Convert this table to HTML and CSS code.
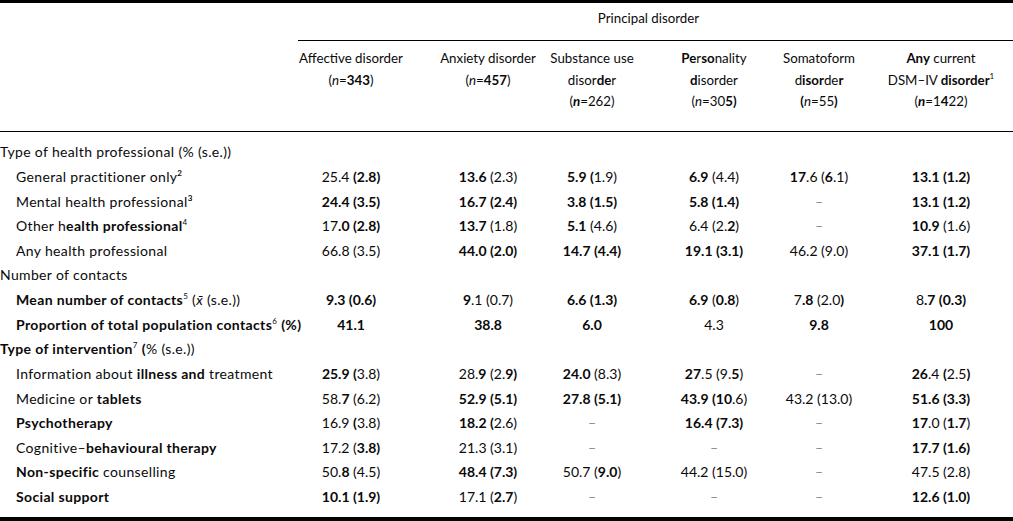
FILE: index.html
```html
<!DOCTYPE html>
<html lang="en">
<head>
<meta charset="utf-8">
<title>Table</title>
<link rel="stylesheet" href="styles.css">
</head>
<body>
<div class="table">
  <div class="head">
    <div class="grid top">
      <div class="title">Principal disorder</div>
    </div>
    <div class="grid cols">
      <div class="hc c1"><div>Affective disorder</div><div>(<i>n</i>=<b>343</b>)</div></div>
      <div class="hc c2"><div>Anxiety disorder</div><div>(<i>n</i>=<b>457</b>)</div></div>
      <div class="hc c3"><div>Substance use</div><div>disor<b>de</b>r</div><div>(<b><i>n</i></b>=262)</div></div>
      <div class="hc c4"><div><b>Pe</b>r<b>so</b>nality</div><div><b>d</b>isorder</div><div>(<i>n</i>=30<b>5)</b></div></div>
      <div class="hc c5"><div>Somatoform</div><div>d<b>isor</b>de<b>r</b></div><div><b>(</b><i>n</i>=55<b>)</b></div></div>
      <div class="hc c6"><div><b>Any</b> current</div><div>DSM–IV <b>disorder</b><sup class="fn">1</sup></div><div>(<b><i>n</i></b>=1<b>4</b>22)</div></div>
    </div>
  </div>
  <div class="grid body">
    <div class="lab cat">Type of health professional (% (s.e.))</div>

    <div class="lab sub">General practitioner only<sup><b>2</b></sup></div>
    <div class="c1">25.4 <b>(2.8)</b></div>
    <div class="c2"><b>13.6</b> (2.3)</div>
    <div class="c3"><b>5.9 (</b>1.9)</div>
    <div class="c4"><b>6.9</b> (4.4)</div>
    <div class="c5"><b>17</b>.6 (<b>6</b>.1)</div>
    <div class="c6"><b>13.1 (1.2)</b></div>

    <div class="lab sub">Mental health professional<sup><b>3</b></sup></div>
    <div class="c1"><b>24.4 (3.5)</b></div>
    <div class="c2"><b>16.7 (2.4)</b></div>
    <div class="c3"><b>3.8 (1.5)</b></div>
    <div class="c4"><b>5.8 (1.4)</b></div>
    <div class="c5 dash">–</div>
    <div class="c6"><b>13.1 (1.2)</b></div>

    <div class="lab sub">Other h<b>ealth professional</b><sup>4</sup></div>
    <div class="c1">17<b>.0 (2.8)</b></div>
    <div class="c2"><b>13.7</b> (1.8)</div>
    <div class="c3"><b>5.1</b> (4.6)</div>
    <div class="c4">6.4 (2.<b>2</b>)</div>
    <div class="c5 dash">–</div>
    <div class="c6"><b>10.9</b> (1.6)</div>

    <div class="lab sub">Any health professional</div>
    <div class="c1">66.8 (3.5)</div>
    <div class="c2"><b>44.0 (2.0)</b></div>
    <div class="c3"><b>14.7 (4.4)</b></div>
    <div class="c4"><b>19.1 (3.1)</b></div>
    <div class="c5">46.2 (9.0)</div>
    <div class="c6"><b>37.1 (1.7)</b></div>

    <div class="lab cat">Number of contacts</div>

    <div class="lab sub"><b>Mean number of contacts</b><sup>5</sup> (<i>x̄</i> (s.e.))</div>
    <div class="c1"><b>9.3 (0.6)</b></div>
    <div class="c2"><b>9</b>.1 (0.7)</div>
    <div class="c3"><b>6.6 (1.3)</b></div>
    <div class="c4"><b>6.9</b> (<b>0.8</b>)</div>
    <div class="c5">7<b>.8</b> (2.0<b>)</b></div>
    <div class="c6">8<b>.7 (0.3)</b></div>

    <div class="lab sub"><b>Proportion of total population contacts</b><sup>6</sup> <b>(%)</b></div>
    <div class="c1"><b>41.1</b></div>
    <div class="c2"><b>38.8</b></div>
    <div class="c3"><b>6.0</b></div>
    <div class="c4">4.3</div>
    <div class="c5"><b>9.8</b></div>
    <div class="c6"><b>100</b></div>

    <div class="lab cat"><b>Type of intervention</b><sup>7</sup> <b>(</b>% (s.e.))</div>

    <div class="lab sub">Information about <b>illness and</b> treatment</div>
    <div class="c1"><b>25.9 (</b>3.8)</div>
    <div class="c2">28.<b>9</b> (2.<b>9)</b></div>
    <div class="c3"><b>24.0</b> (8.3)</div>
    <div class="c4"><b>27</b>.5 (9.<b>5</b>)</div>
    <div class="c5 dash">–</div>
    <div class="c6"><b>26</b>.4 <b>(</b>2.5<b>)</b></div>

    <div class="lab sub">Medicine or <b>tablets</b></div>
    <div class="c1">58.<b>7</b> (6.2)</div>
    <div class="c2"><b>52.9 (5.1)</b></div>
    <div class="c3"><b>27.8 (5.1)</b></div>
    <div class="c4"><b>43.9 (10</b>.6)</div>
    <div class="c5">43.2 (13.0)</div>
    <div class="c6"><b>51.6 (3.3)</b></div>

    <div class="lab sub"><b>Psychotherapy</b></div>
    <div class="c1">16.9 <b>(</b>3.8)</div>
    <div class="c2"><b>18.2 (</b>2.6)</div>
    <div class="c3 dash">–</div>
    <div class="c4"><b>16.4 (7.3)</b></div>
    <div class="c5 dash">–</div>
    <div class="c6"><b>17</b>.0 (<b>1.7</b>)</div>

    <div class="lab sub">Cognitive–<b>behavioural therapy</b></div>
    <div class="c1">17.2 (<b>3.8)</b></div>
    <div class="c2">21.3 (3.1)</div>
    <div class="c3 dash">–</div>
    <div class="c4 dash">–</div>
    <div class="c5 dash">–</div>
    <div class="c6"><b>17.7 (1.6)</b></div>

    <div class="lab sub"><b>Non-specific</b> counselling</div>
    <div class="c1">50.<b>8</b> (4.5)</div>
    <div class="c2"><b>48.4 (7.3)</b></div>
    <div class="c3">50.7 (<b>9.0</b>)</div>
    <div class="c4">44.2 (15.0)</div>
    <div class="c5 dash">–</div>
    <div class="c6">47.5 (2.8)</div>

    <div class="lab sub"><b>Social support</b></div>
    <div class="c1"><b>10.1 (1.9)</b></div>
    <div class="c2">17.1 (<b>2.7</b>)</div>
    <div class="c3 dash">–</div>
    <div class="c4 dash">–</div>
    <div class="c5 dash">–</div>
    <div class="c6"><b>12.6 (1.0)</b></div>
  </div>
</div>
</body>
</html>
```
FILE: styles.css
```css
html, body {
  margin: 0;
  padding: 0;
  background: #fff;
}
body {
  font-family: "Lato", "Noto Sans", sans-serif;
  font-size: 14px;
  color: #0a0a0a;
}
b { font-weight: 700; }
sup {
  font-size: 8px;
  line-height: 0;
  vertical-align: 6px;
}
.table {
  width: 1013px;
  height: 521px;
  box-sizing: border-box;
  border-top: 3px solid #000;
  border-bottom: 4px solid #000;
}
.grid {
  display: grid;
  grid-template-columns: 298px 106px 34px 100px 4px 100px 22px 100px 5px 100px 22px 100px 22px;
}
.head {
  border-bottom: 1px solid #000;
  font-size: 13.3px;
}
.top .title {
  grid-column: 2 / -1;
  text-align: center;
  line-height: 21px;
  padding: 5px 14px 11px 0;
  border-bottom: 1px solid #000;
}
.cols {
  padding: 7px 0 18px;
  line-height: 21.5px;
  align-items: start;
}
.hc {
  justify-self: unsafe center;
  white-space: nowrap;
  text-align: center;
}
.c1 { grid-column: 2; }
.c2 { grid-column: 4; }
.c3 { grid-column: 6; }
.c4 { grid-column: 8; }
.c5 { grid-column: 10; }
.c6 { grid-column: 12; }
.body {
  padding: 8px 0 7px;
  grid-auto-rows: 24.64px;
  align-items: center;
}
.body > div {
  white-space: nowrap;
}
.body > .c1, .body > .c2, .body > .c3, .body > .c4, .body > .c5, .body > .c6 {
  justify-self: unsafe center;
}
.lab {
  grid-column: 1;
  letter-spacing: 0.35px;
}
.lab.cat { grid-column: 1 / -1; padding-left: 0; }
.lab.sub { padding-left: 16px; }
.dash { color: #8a8a8a; }
```
